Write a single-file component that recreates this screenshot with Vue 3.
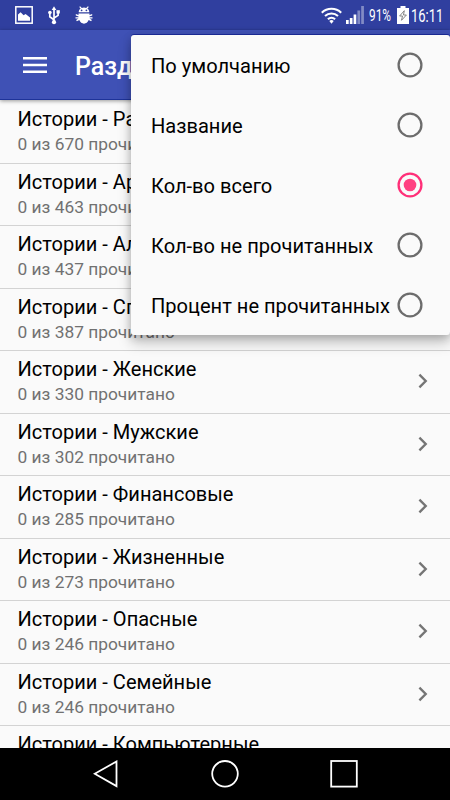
<template>
  <div class="screen">
    <div class="statusbar">
      <svg class="ico-picture" width="18" height="18" viewBox="0 0 18 18">
        <rect x="0.8" y="0.8" width="16.4" height="16.4" fill="none" stroke="#fff" stroke-width="1.5" />
        <path d="M3 14.8V8.500l2.600-2.300 3 3 2-1.200 4.400 3.400v3.400z" fill="#fff" />
      </svg>
      <svg class="ico-usb" width="12" height="19" viewBox="0 0 12 19">
        <path d="M6 3v12M6 13.800L1.800 10.800V7M6 12l4.100-2.600V6" fill="none" stroke="#fff" stroke-width="1.700" />
        <path d="M6 0.300l2.300 3.800H3.700z" fill="#fff" />
        <circle cx="6" cy="16.200" r="2.100" fill="#fff" />
        <circle cx="1.900" cy="6.600" r="1.800" fill="#fff" />
        <rect x="8.500" y="4.200" width="3.300" height="3.300" fill="#fff" />
      </svg>
      <svg class="ico-bug" width="18" height="18" viewBox="0 0 18 18">
        <path d="M3.700 6.300C3.700 4.500 4.600 3.300 5.700 2.600L4.200 1.100l.9-.8L6.800 1.900a6.500 6.500 0 0 1 4.400 0L12.900.3l.9.800-1.500 1.500c1.100.7 2 1.900 2 3.700z" fill="#fff" />
        <path d="M3.500 7.400h11v1.700L17.200 8v1.500l-2.700 1v.7h3v1.400h-3l2.400 1.500-.8 1.200-2.400-1.200C12.800 16.300 11 17.700 9 17.700S5.200 16.300 4.300 14.100L1.900 15.300l-.8-1.200 2.400-1.500h-3v-1.400h3v-.7l-2.700-1V8l2.700 1.100z" fill="#fff" />
        <circle cx="6.600" cy="4.300" r=".9" fill="#303f9f" />
        <circle cx="11.400" cy="4.300" r=".9" fill="#303f9f" />
      </svg>
      <span class="spacer"></span>
      <svg class="ico-wifi" width="21" height="17" viewBox="0 0 21 17">
        <g fill="none" stroke="#fff" stroke-width="2.100">
          <path d="M.8 5.700a14 14 0 0 1 19.400 0" />
          <path d="M4 9a9.600 9.600 0 0 1 13 0" />
          <path d="M6.900 12.200a5.400 5.400 0 0 1 7.200 0" />
        </g>
        <path d="M10.500 16.700l-2.200-2.600a3.300 3.300 0 0 1 4.400 0z" fill="#fff" />
      </svg>
      <svg class="ico-signal" width="18" height="18" viewBox="0 0 18 18">
        <path d="M0 14h2.700v4H0zM3.800 12h2.700v6H3.800zM7.600 8.500h2.700V18H7.600z" fill="#fff" />
        <path d="M11.400 4.500h2.700V18h-2.700zM15.200 0h2.700v18h-2.700z" fill="#fff" opacity=".4" />
      </svg>
      <span class="percent"><span class="narrow">91%</span></span>
      <svg class="ico-battery" width="12" height="18" viewBox="0 0 12 18">
        <path d="M3.500 0h5v2H12v16H0V2h3.500z" fill="#fff" />
        <path d="M7.300 4.700L2.600 10h2.900l-1 4.300L9.400 9H6.500z" fill="none" stroke="#777" stroke-width=".9" />
      </svg>
      <span class="clock"><span class="narrow">16:11</span></span>
    </div>

    <div class="toolbar">
      <svg width="24" height="16" viewBox="0 0 24 16">
        <path d="M0 1.250h24M0 8h24M0 14.750h24" stroke="#fff" stroke-width="2.500" />
      </svg>
      <span class="toolbar-title">Разделы</span>
    </div>

    <div class="list">
      <div v-for="s in sections" :key="s.name" class="row">
        <div class="row-text">
          <div class="name">Истории - {{ s.name }}</div>
          <div class="count">0 из {{ s.total }} прочитано</div>
        </div>
        <svg class="chevron" width="10" height="16" viewBox="0 0 10 16">
          <path d="M1.400 1.700L7.700 8l-6.300 6.300" fill="none" stroke="#757575" stroke-width="2.400" />
        </svg>
      </div>
    </div>

    <div class="navbar">
      <svg width="26" height="28" viewBox="0 0 26 28">
        <path d="M23.500 1.500v24.600L1.700 13.800z" fill="none" stroke="#fff" stroke-width="1.800" />
      </svg>
      <svg width="28" height="28" viewBox="0 0 28 28">
        <circle cx="14" cy="13.800" r="12.800" fill="none" stroke="#fff" stroke-width="1.800" />
      </svg>
      <svg width="28" height="28" viewBox="0 0 28 28">
        <rect x="1.200" y="1" width="25.600" height="25.600" fill="none" stroke="#fff" stroke-width="1.800" />
      </svg>
    </div>

    <div class="menu">
      <div v-for="o in options" :key="o" class="option" @click="selected = o">
        <span class="option-label">{{ o }}</span>
        <svg class="radio" :class="{ checked: o === selected }" width="26" height="26" viewBox="0 0 26 26">
          <circle class="ring" cx="13" cy="13" r="11.400" />
          <circle v-if="o === selected" class="dot" cx="13" cy="13" r="6.300" />
        </svg>
      </div>
    </div>
  </div>
</template>

<script setup>
import { ref } from 'vue'

const selected = ref('Кол-во всего')
const options = [
  'По умолчанию',
  'Название',
  'Кол-во всего',
  'Кол-во не прочитанных',
  'Процент не прочитанных'
]
const sections = [
  { name: 'Разные', total: 670 },
  { name: 'Армейские', total: 463 },
  { name: 'Алкогольные', total: 437 },
  { name: 'Спортивные', total: 387 },
  { name: 'Женские', total: 330 },
  { name: 'Мужские', total: 302 },
  { name: 'Финансовые', total: 285 },
  { name: 'Жизненные', total: 273 },
  { name: 'Опасные', total: 246 },
  { name: 'Семейные', total: 246 },
  { name: 'Компьютерные', total: 240 }
]
</script>

<style>
body {
  margin: 0;
}
</style>

<style scoped>
.screen {
  position: relative;
  width: 450px;
  height: 800px;
  display: flex;
  flex-direction: column;
  overflow: hidden;
  background: #fafafa;
  font-family: Roboto, sans-serif;
}
.statusbar {
  flex: none;
  height: 30px;
  box-sizing: border-box;
  padding: 0 9px 0 15px;
  display: flex;
  align-items: center;
  background: #303f9f;
  color: #fff;
}
.ico-usb {
  margin-left: 15px;
}
.ico-bug {
  margin-left: 15px;
}
.spacer {
  flex: 1;
}
.ico-signal {
  margin-left: 4px;
}
.percent {
  width: 24px;
  margin-left: 5px;
  font-size: 16.500px;
}
.ico-battery {
  margin-left: 4px;
}
.clock {
  width: 30px;
  margin-left: 2px;
  font-size: 18px;
}
.narrow {
  display: inline-block;
  transform: scaleX(0.72);
  transform-origin: left center;
}
.toolbar {
  flex: none;
  height: 70px;
  box-sizing: border-box;
  padding: 1px 0 0 23px;
  display: flex;
  align-items: center;
  background: #3f51b5;
  border-bottom: 1px solid #1e3399;
  box-shadow: 0 1px 4px rgba(0, 0, 0, 0.4);
  z-index: 1;
}
.toolbar-title {
  margin: 2px 0 0 28px;
  color: #fff;
  font-size: 25px;
  font-weight: 500;
}
.list {
  flex: 1;
  min-height: 0;
  padding-top: 1px;
  overflow: hidden;
}
.row {
  height: 62.500px;
  box-sizing: border-box;
  padding: 5px 22px 0 17.500px;
  display: flex;
  justify-content: space-between;
  border-bottom: 1px solid #d3d3d3;
}
.name {
  color: #000;
  font-size: 20.060px;
  line-height: 26px;
  white-space: nowrap;
}
.count {
  color: #717171;
  font-size: 17.350px;
  line-height: 24px;
}
.chevron {
  margin-top: 17px;
}
.navbar {
  flex: none;
  height: 52px;
  box-sizing: border-box;
  padding: 0 92px 0 93px;
  display: flex;
  align-items: center;
  justify-content: space-between;
  background: #000;
}
.menu {
  position: absolute;
  top: 35px;
  left: 131px;
  width: 319px;
  height: 300px;
  background: #fafafa;
  border-radius: 3px;
  box-shadow: 0 8px 14px rgba(0, 0, 0, 0.22), 0 2px 8px rgba(0, 0, 0, 0.18), 0 -1px 0 #1c2c9c;
  z-index: 2;
}
.option {
  height: 60px;
  box-sizing: border-box;
  padding: 0 27px 0 20px;
  display: flex;
  align-items: center;
  justify-content: space-between;
  color: #000;
  font-size: 20.080px;
  white-space: nowrap;
}
.option-label {
  margin-top: 2px;
}
.radio {
  flex: none;
  fill: none;
  stroke: #6c6c6c;
  stroke-width: 2.300;
}
.radio.checked {
  stroke: #ff2f78;
}
.dot {
  fill: #ff4081;
  stroke: none;
}
</style>
